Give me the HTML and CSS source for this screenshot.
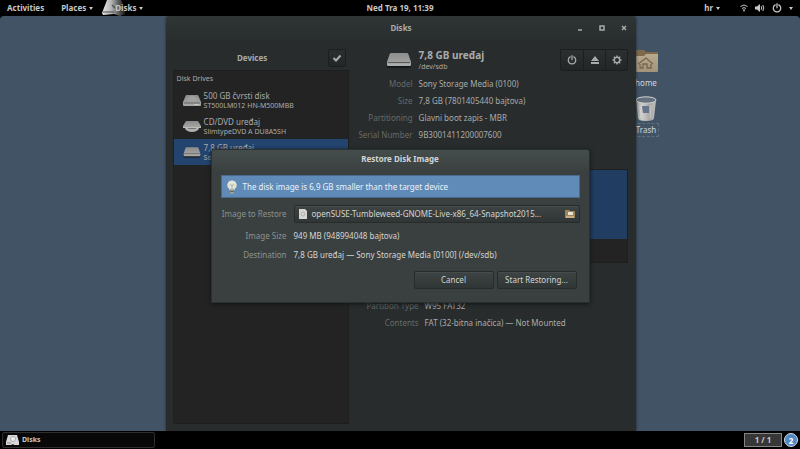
FILE: index.html
```html
<!DOCTYPE html>
<html lang="hr">
<head>
    <meta charset="UTF-8">
    <meta name="viewport" content="width=device-width, initial-scale=1.0">
    <title>Disks</title>
    <link rel="stylesheet" href="styles.css">
</head>
<body>
    <!-- Shared drawings -->
    <svg class="defs" width="0" height="0" aria-hidden="true">
        <defs>
            <linearGradient id="metal" x1="0" y1="0" x2="0" y2="1">
                <stop offset="0" stop-color="#8c8c8a"/>
                <stop offset="1" stop-color="#a8a8a6"/>
            </linearGradient>
            <linearGradient id="shine" x1="0" y1="0" x2="1" y2="0">
                <stop offset="0" stop-color="#e8e8e8"/>
                <stop offset="0.4" stop-color="#b4b4b4"/>
                <stop offset="0.7" stop-color="#606060"/>
                <stop offset="1" stop-color="#1c1c1c"/>
            </linearGradient>
            <linearGradient id="paper" x1="0" y1="0" x2="0" y2="1">
                <stop offset="0" stop-color="#b9aa8f"/>
                <stop offset="1" stop-color="#a3937a"/>
            </linearGradient>
            <linearGradient id="can" x1="0" y1="0" x2="1" y2="0">
                <stop offset="0" stop-color="#8e8e8c"/>
                <stop offset="0.3" stop-color="#cfcfcd"/>
                <stop offset="0.7" stop-color="#a5a5a3"/>
                <stop offset="1" stop-color="#c2c2c0"/>
            </linearGradient>
        </defs>
        <symbol id="drive" viewBox="0 0 26 16">
            <path d="M1 12h24v3q0 1-1 1H2q-1 0-1-1z" fill="#171a1a"/>
            <path d="M5 1h16q1 0 1.300 1L25 10v3q0 1-1 1H2q-1 0-1-1v-3l2.700-8Q4 1 5 1z" fill="url(#metal)"/>
            <path d="M2 10.500h22" stroke="#5a5c5a" stroke-width="1"/>
            <path d="M2 12.500h22" stroke="#aeb0ae" stroke-width="1"/>
        </symbol>
        <symbol id="harddisk" viewBox="0 0 18 12">
            <path d="M3 1h12l3 7v3q0 1-1 1H1q-1 0-1-1V8z" fill="url(#metal)"/>
            <ellipse cx="9" cy="5" rx="5" ry="3" fill="#a0a09e"/>
            <path d="M1 9h16" stroke="#686868" stroke-width="1"/>
            <path d="M11 10.500h5" stroke="#c8c8c8" stroke-width="1"/>
        </symbol>
        <symbol id="optical" viewBox="0 0 18 12">
            <ellipse cx="9" cy="8" rx="7" ry="4" fill="#b0b0ae"/>
            <path d="M3 1h12l3 5v2H0V6z" fill="url(#metal)"/>
            <path d="M0 7.500h18" stroke="#bcbcba"/>
            <path d="M5 8.500h8" stroke="#777"/>
        </symbol>
        <symbol id="power" viewBox="0 0 12 12">
            <path d="M3.800 2.300a4.500 4.500 0 1 0 4.400 0M6 .8v5" fill="none" stroke="currentColor" stroke-width="1.500" stroke-linecap="round"/>
        </symbol>
    </svg>

    <header class="panel top-panel">
        <button class="panel-item">Activities</button>
        <button class="panel-item places">Places <span class="arrow"></span></button>
        <button class="panel-item app-menu">
            <svg class="app-icon" width="23" height="16" viewBox="0 0 23 16" aria-hidden="true">
                <path d="M5 0h14l4 11v3l-5 2-6-2-11 1-1-2z" fill="url(#shine)"/>
                <path d="M1 12h11" stroke="#4a4a4a"/>
                <path d="M10 5l3 3" fill="none" stroke="#555" stroke-width="1.500"/>
            </svg>
            <span class="app-name">Disks</span> <span class="arrow"></span>
        </button>
        <time class="clock">Ned Tra 19, 11:39</time>
        <div class="status-area">
            <button class="panel-item">hr <span class="arrow"></span></button>
            <button class="panel-item indicators" aria-label="System">
                <svg width="8" height="8" viewBox="0 0 8 8"><path d="M.5 2.500q3.500-3 7 0M2 4.500q2-1.800 4 0" fill="none" stroke="currentColor"/><path d="M2.700 5.500h2.600L4 8z" fill="currentColor"/></svg>
                <svg width="10" height="8" viewBox="0 0 10 8"><path d="M0 2.500h2L5 0v8L2 5.500H0z" fill="currentColor"/><path d="M6.200 2.200q1.300 1.800 0 3.600M7.800 1q2 3 0 6" fill="none" stroke="currentColor"/></svg>
                <svg width="10" height="10"><use href="#power"/></svg>
                <span class="arrow"></span>
            </button>
        </div>
    </header>

    <main class="desktop">
        <a class="shortcut home" href="#home">
            <svg width="26" height="24" viewBox="0 0 26 24" aria-hidden="true">
                <path d="M1 1h10l2 2h12v6H1z" fill="#80694a"/>
                <path d="M1 7h10l2-2h12v17q0 1-1 1H2q-1 0-1-1z" fill="url(#paper)"/>
                <path d="M5 15l8-6 7 6M7 15v4h3v-4h4v4h4v-4" fill="none" stroke="#75654d" stroke-width="1.300"/>
            </svg>
            <span>home</span>
        </a>
        <a class="shortcut trash" href="#trash">
            <svg width="22" height="26" viewBox="0 0 22 26" aria-hidden="true">
                <path d="M1 4l2 18q0 3 8 3t8-3l2-18z" fill="url(#can)"/>
                <ellipse cx="11" cy="4" rx="10" ry="3.200" fill="#64707d" stroke="#d0d0ce"/>
                <path d="M7 10h7v7H8z" fill="#64748a"/>
                <path d="M5 9l1 13M16 9l-1 13" stroke="#e0e0de" opacity=".6"/>
            </svg>
            <span>Trash</span>
        </a>

        <section class="window" aria-label="Disks">
            <div class="titlebar">
                <h1>Disks</h1>
                <div class="window-controls">
                    <button aria-label="Minimize"><svg width="6" height="6"><path d="M1 5h4" stroke="currentColor" stroke-width="1.500"/></svg></button>
                    <button aria-label="Maximize"><svg width="6" height="6"><path d="M1 1h4v4H1z" fill="none" stroke="currentColor" stroke-width="1.500"/></svg></button>
                    <button aria-label="Close"><svg width="6" height="6"><path d="M1 1l4 4M5 1L1 5" stroke="currentColor" stroke-width="1.500"/></svg></button>
                </div>
            </div>
            <div class="window-body">
                <aside class="sidebar">
                    <div class="sidebar-head">
                        <h2>Devices</h2>
                        <button class="tool check" aria-label="Select devices"><svg width="10" height="8" viewBox="0 0 10 8"><path d="M1.500 4l2.500 2.500L8.500 1.500" fill="none" stroke="currentColor" stroke-width="2"/></svg></button>
                    </div>
                    <div class="device-list">
                        <h3>Disk Drives</h3>
                        <ul>
                            <li>
                                <svg width="18" height="12"><use href="#harddisk"/></svg>
                                <div><strong>500 GB čvrsti disk</strong><small>ST500LM012 HN-M500MBB</small></div>
                            </li>
                            <li>
                                <svg width="18" height="12"><use href="#optical"/></svg>
                                <div><strong>CD/DVD uređaj</strong><small>SlimtypeDVD A DU8A5SH</small></div>
                            </li>
                            <li class="selected">
                                <svg width="18" height="12"><use href="#drive"/></svg>
                                <div><strong>7,8 GB uređaj</strong><small>Sony Storage Media</small></div>
                            </li>
                        </ul>
                    </div>
                </aside>
                <div class="details">
                    <div class="drive-head">
                        <svg width="26" height="16"><use href="#drive"/></svg>
                        <div class="drive-name"><h2>7,8 GB uređaj</h2><small>/dev/sdb</small></div>
                        <div class="toolbar">
                            <button class="tool" aria-label="Power off"><svg width="10" height="10"><use href="#power"/></svg></button>
                            <button class="tool" aria-label="Eject"><svg width="10" height="8" viewBox="0 0 10 8"><path d="M5 0l4 5H1zM1 6h8v2H1z" fill="currentColor"/></svg></button>
                            <button class="tool" aria-label="Drive options"><svg width="10" height="10" viewBox="0 0 10 10"><circle cx="5" cy="5" r="2.700" fill="none" stroke="currentColor" stroke-width="1.400"/><path d="M5 .5v1.500M5 8v1.500M.5 5H2M8 5h1.500M1.800 1.800l1 1M7.200 7.200l1 1M8.200 1.800l-1 1M2.800 7.200l-1 1" stroke="currentColor" stroke-width="1.400"/></svg></button>
                        </div>
                    </div>
                    <dl class="properties">
                        <dt>Model</dt><dd>Sony Storage Media (0100)</dd>
                        <dt>Size</dt><dd>7,8 GB (7801405440 bajtova)</dd>
                        <dt>Partitioning</dt><dd>Glavni boot zapis - MBR</dd>
                        <dt>Serial Number</dt><dd>9B3001411200007600</dd>
                    </dl>
                    <div class="volumes">
                        <div class="volume"></div>
                        <div class="volume-tools"></div>
                    </div>
                    <dl class="properties partition">
                        <dt>Partition Type</dt><dd>W95 FAT32</dd>
                        <dt>Contents</dt><dd>FAT (32-bitna inačica) — Not Mounted</dd>
                    </dl>
                </div>
            </div>
        </section>

        <form class="dialog" role="dialog" aria-labelledby="dialog-title">
            <h2 id="dialog-title">Restore Disk Image</h2>
            <div class="infobar">
                <svg width="12" height="14" viewBox="0 0 12 14" aria-hidden="true">
                    <path d="M6 .5a4.500 4.500 0 0 1 3 8L8.500 10h-5L3 8.500a4.500 4.500 0 0 1 3-8z" fill="#e3e4d8"/>
                    <path d="M4 4l2 2 2-2M6 6v4" fill="none" stroke="#b5b29a"/>
                    <path d="M4 9h4v4l-2 1-2-1z" fill="#a3a29a"/>
                    <path d="M4 11.500h4" stroke="#66655f"/>
                </svg>
                <span>The disk image is 6,9 GB smaller than the target device</span>
            </div>
            <div class="fields">
                <label for="image">Image to Restore</label>
                <button type="button" class="button chooser" id="image">
                    <svg width="8" height="10" viewBox="0 0 8 10" aria-hidden="true"><path d="M0 0h6l2 2v8H0z" fill="#d5d5d3"/><circle cx="4" cy="5" r="2" fill="none" stroke="#b4b4b2"/></svg>
                    <span>openSUSE-Tumbleweed-GNOME-Live-x86_64-Snapshot2015...</span>
                    <svg class="folder" width="10" height="8" viewBox="0 0 10 8" aria-hidden="true"><path d="M0 0h4l1 1h5v7H0z" fill="#a18456"/><path d="M3 2h5v3H3z" fill="#e4e2dc"/><path d="M1 6h8v2H1z" fill="#c7ad82"/></svg>
                </button>
                <label for="image-size">Image Size</label>
                <output id="image-size">949 MB (948994048 bajtova)</output>
                <label for="destination">Destination</label>
                <output id="destination">7,8 GB uređaj — Sony Storage Media [0100] (/dev/sdb)</output>
            </div>
            <div class="actions">
                <button type="button" class="button">Cancel</button>
                <button type="button" class="button">Start Restoring...</button>
            </div>
        </form>
    </main>

    <footer class="panel bottom-panel">
        <button class="task">
            <svg width="13" height="10" viewBox="0 0 13 10" aria-hidden="true"><path d="M2 0h9l2 7v3H8L7 9l-2 1H0V7z" fill="#d8d8d8"/><circle cx="7" cy="4" r="2.500" fill="#eee" stroke="#aaa"/><path d="M1 8h4" stroke="#888"/></svg>
            Disks
        </button>
        <div class="tray">
            <button class="workspace">1 / 1</button>
            <button class="notifications">2</button>
        </div>
    </footer>
</body>
</html>
```
FILE: styles.css
```css
* {
    box-sizing: border-box;
}
body {
    margin: 0;
    height: 100vh;
    display: flex;
    flex-direction: column;
    overflow: hidden;
    background: #000;
    color: #a9abaa;
    font-family: "Noto Sans", "Open Sans", sans-serif;
    font-size: 8px;
    line-height: 12px;
}
h1, h2, h3, ul, dl, dd {
    margin: 0;
    padding: 0;
}
h1, h2 {
    font-size: 8px;
    font-weight: bold;
}
button {
    margin: 0;
    padding: 0;
    border: none;
    background: none;
    color: inherit;
    font: inherit;
    cursor: pointer;
}
svg {
    display: block;
    flex: none;
}
.defs {
    position: absolute;
}

/* Panels */
.panel {
    display: flex;
    align-items: center;
    flex: none;
    color: #c8c8c8;
    font-weight: bold;
}
.top-panel {
    height: 16px;
    padding: 0 7px;
    display: grid;
    grid-template-columns: auto auto 1fr auto 1fr;
}
.panel-item {
    display: flex;
    align-items: center;
    gap: 3px;
}
.places {
    margin-left: 17px;
}
.app-menu {
    position: relative;
    margin-left: 22px;
    justify-self: start;
}
.app-icon {
    position: absolute;
    left: -13px;
    top: -2px;
}
.app-name {
    position: relative;
}
.arrow {
    border: 2px solid transparent;
    border-top: 3px solid currentColor;
    border-bottom: 0;
}
.clock {
    position: absolute;
    left: 0;
    right: 0;
    text-align: center;
    pointer-events: none;
}
.status-area {
    grid-column: 5;
    display: flex;
    justify-content: flex-end;
    gap: 20px;
}
.indicators {
    gap: 7px;
}
.bottom-panel {
    height: 18px;
    padding: 1px 2px;
    justify-content: space-between;
}
.task {
    display: flex;
    align-items: center;
    gap: 3px;
    width: 153px;
    height: 16px;
    padding: 0 3px;
    border: 1px solid #2e2e2e;
    border-radius: 2px;
    background: #080808;
    font-size: 7px;
    font-weight: bold;
}
.tray {
    display: flex;
    align-items: center;
    gap: 2px;
}
.workspace {
    width: 38px;
    height: 14px;
    border: 1px solid #858585;
    background: #373737;
    font-weight: bold;
}
.notifications {
    width: 14px;
    height: 14px;
    border: 1px solid #d8dde3;
    border-radius: 50%;
    background: #5288c4;
    color: #fff;
    font-weight: bold;
    line-height: 11px;
}

/* Desktop */
.desktop {
    position: relative;
    flex: 1;
    min-height: 0;
    display: flex;
    justify-content: center;
    padding-left: 2px;
    border-radius: 4px 4px 0 0;
    background: #425366;
    overflow: hidden;
}
.shortcut {
    position: absolute;
    right: 134px;
    width: 40px;
    display: flex;
    flex-direction: column;
    align-items: center;
    color: #d2d5d8;
    text-decoration: none;
}
.shortcut span {
    padding: 0 2px;
    border: 1px dashed transparent;
}
.home {
    top: 33px;
    gap: 3px;
}
.trash {
    top: 80px;
    gap: 1px;
}
.trash span {
    border-color: #5f6f80;
}

/* Disks window */
.window {
    position: relative;
    width: 59%;
    display: flex;
    flex-direction: column;
    border-radius: 4px 4px 0 0;
    background: linear-gradient(#2f3635, #282c2d 26px);
    box-shadow: 0 0 3px #1d252e;
}
.titlebar {
    display: grid;
    grid-template-columns: 1fr auto 1fr;
    align-items: center;
    height: 24px;
    padding: 0 9px;
}
.titlebar h1 {
    grid-column: 2;
}
.window-controls {
    display: flex;
    justify-content: flex-end;
    gap: 16px;
}
.window-body {
    flex: 1;
    display: flex;
    gap: 7px;
    padding: 8px 8px 7px 7px;
}
.sidebar {
    width: 176px;
    display: flex;
    flex-direction: column;
    gap: 2px;
}
.sidebar-head {
    display: grid;
    grid-template-columns: 1fr auto;
    align-items: center;
    padding-right: 3px;
    height: 20px;
}
.sidebar-head h2 {
    padding-left: 4px;
    text-align: center;
}
.tool {
    display: flex;
    align-items: center;
    justify-content: center;
    width: 22px;
    height: 20px;
    background: linear-gradient(#2b302f, #232627);
}
.check {
    width: 18px;
    height: 18px;
    border: 1px solid #1c1f1f;
    border-radius: 2px;
}
.device-list {
    flex: 1;
    border: 1px solid #1d1f1f;
    background: #232323;
}
.device-list h3 {
    padding: 2px 3px;
    font-size: 7px;
    font-weight: normal;
    line-height: 12px;
}
.device-list ul {
    list-style: none;
}
.device-list li {
    display: flex;
    align-items: center;
    gap: 3px;
    height: 26px;
    padding-left: 9px;
}
.device-list li.selected {
    background: #23446e;
}
.device-list strong {
    display: block;
    font-weight: normal;
    line-height: 11px;
}
.device-list small {
    display: block;
    font-size: 7px;
    line-height: 10px;
}
.details {
    flex: 1;
    display: flex;
    flex-direction: column;
}
.drive-head {
    display: flex;
    align-items: center;
    gap: 7px;
    height: 24px;
    padding-left: 30px;
}
.drive-name {
    flex: 1;
}
.drive-name h2 {
    font-size: 10px;
    line-height: 13px;
}
.drive-name small {
    display: block;
    font-size: 7px;
    line-height: 10px;
}
.toolbar {
    display: flex;
    border: 1px solid #1c1f1f;
    border-radius: 2px;
}
.tool + .tool {
    border-left: 1px solid #1c1f1f;
}
.properties {
    display: grid;
    grid-template-columns: 57px 1fr;
    gap: 5px 6px;
    padding-top: 6px;
    white-space: nowrap;
}
.properties dt {
    color: #666a69;
    text-align: right;
}
.partition {
    grid-template-columns: 63px 1fr;
    padding-top: 37px;
}
.volumes {
    margin-top: 28px;
    border: 1px solid #1d1f1f;
}
.volume {
    height: 69px;
    background: #213d62;
}
.volume-tools {
    height: 23px;
    background: #232323;
}

/* Restore dialog */
.dialog {
    position: absolute;
    top: 133px;
    left: 0;
    right: 0;
    width: 379px;
    margin: 0 auto;
    padding: 0 9px 13px;
    border: 1px solid #2a3030;
    border-radius: 3px 3px 0 0;
    background: linear-gradient(#454d4c, #3a403f 22px);
    box-shadow: 0 1px 4px #111414;
    color: #d3d5d4;
}
.dialog h2 {
    padding: 3px 0 10px;
    text-align: center;
}
.infobar {
    display: flex;
    align-items: center;
    gap: 5px;
    height: 23px;
    padding: 0 4px;
    border: 1px solid #49698f;
    background: #608ab8;
    color: #edf2f7;
}
.fields {
    display: grid;
    grid-template-columns: 66px 1fr;
    align-items: center;
    gap: 7px;
    padding-top: 7px;
}
.fields label {
    color: #8d9190;
    text-align: right;
    white-space: nowrap;
}
.button {
    height: 18px;
    border: 1px solid #272c2b;
    border-radius: 2px;
    background: linear-gradient(#3d4443, #303635);
    box-shadow: inset 0 1px #454c4b;
}
.chooser {
    display: flex;
    align-items: center;
    gap: 5px;
    padding: 0 4px;
    white-space: nowrap;
}
.folder {
    margin-left: auto;
}
.actions {
    display: flex;
    justify-content: flex-end;
    gap: 3px;
    padding: 10px 3px 0;
}
.actions .button {
    width: 80px;
}
```
